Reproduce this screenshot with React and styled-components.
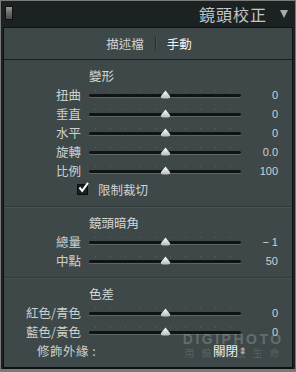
import React from 'react'
import styled, { createGlobalStyle } from 'styled-components';

const Global = createGlobalStyle`
  html, body {
    margin: 0;
    padding: 0;
    background: #6e6e6e;
  }
  body {
    font-family: "Noto Sans CJK TC", "Liberation Sans", sans-serif;
  }
`

const sections = [
  {
    title: '變形',
    rows: [
      { label: '扭曲', value: '0' },
      { label: '垂直', value: '0' },
      { label: '水平', value: '0' },
      { label: '旋轉', value: '0.0' },
      { label: '比例', value: '100' },
    ],
    check: '限制裁切',
  },
  {
    title: '鏡頭暗角',
    rows: [
      { label: '總量', value: '− 1' },
      { label: '中點', value: '50' },
    ],
  },
  {
    title: '色差',
    rows: [
      { label: '紅色/青色', value: '0' },
      { label: '藍色/黃色', value: '0' },
    ],
    fringe: true,
  },
]

const Thumb = () => (
  <svg width="11" height="9" viewBox="0 0 11 9">
    <defs>
      <linearGradient id="tg" x1="0" y1="0" x2="0" y2="1">
        <stop offset="0" stopColor="#ffffff" />
        <stop offset="1" stopColor="#b8bcbc" />
      </linearGradient>
    </defs>
    <path d="M5.5 0.5 C6.5 2 9 4.5 10 6 C10.6 7.4 9.6 8.5 8 8.5 L3 8.5 C1.4 8.5 0.4 7.4 1 6 C2 4.5 4.5 2 5.5 0.5 Z" fill="url(#tg)" />
  </svg>
)

const Slider = () => (
  <Track>
    <Ticks />
    <Groove />
    <ThumbWrap><Thumb /></ThumbWrap>
  </Track>
)

const App = () => {
  return (
    <Frame>
      <Global />
      <Header>
        <Handle />
        <Title>鏡頭校正</Title>
        <Caret />
      </Header>
      <Panel>
        <Tabs>
          <Tab>描述檔</Tab>
          <TabDivider />
          <Tab $active>手動</Tab>
        </Tabs>
        {sections.map((s, i) => (
          <Section key={s.title} $last={i === sections.length - 1}>
            <SectionTitle>{s.title}</SectionTitle>
            {s.rows.map(r => (
              <Row key={r.label}>
                <Label>{r.label}</Label>
                <Slider />
                <Value>{r.value}</Value>
              </Row>
            ))}
            {s.check && (
              <CheckRow>
                <Box>
                  <svg width="11" height="11" viewBox="0 0 11 11">
                    <path d="M1.5 5.5 L4.2 8.8 L10 0.8" stroke="#ffffff" strokeWidth="2" fill="none" />
                  </svg>
                </Box>
                <CheckLabel>{s.check}</CheckLabel>
              </CheckRow>
            )}
            {s.fringe && (
              <FringeRow>
                <FringeLabel>修飾外緣 :</FringeLabel>
                <Select>關閉<Arrows>⇕</Arrows></Select>
              </FringeRow>
            )}
          </Section>
        ))}
        <Watermark>
          <span className="big">DIGIPHOTO</span>
          <span className="small">用鏡頭說生命</span>
        </Watermark>
      </Panel>
    </Frame>
  )
}

export default App

const Frame = styled.div`
  width: 296px;
  height: 372px;
  box-sizing: border-box;
  border: 1px solid #7a7a7a;
  border-bottom-width: 3px;
  background: #1c2222;
  display: flex;
  flex-direction: column;
`

const Header = styled.div`
  height: 26px;
  display: flex;
  align-items: center;
  padding: 0 7px 0 4px;
`

const Handle = styled.div`
  width: 6px;
  height: 12px;
  border: 1px solid #111;
  background: linear-gradient(#9a9a9a, #6a6a6a 50%, #4a4a4a);
  margin-top: -2px;
`

const Title = styled.div`
  margin-left: auto;
  font-size: 16px;
  letter-spacing: 1px;
  color: #c4c6c6;
  margin-right: 13px;
  line-height: 26px;
`

const Caret = styled.div`
  width: 0;
  height: 0;
  border-left: 4.5px solid transparent;
  border-right: 4.5px solid transparent;
  border-top: 8px solid #a8acac;
  margin-top: -1px;
`

const Panel = styled.div`
  flex: 1;
  margin: 0 2px;
  border: 1px solid #0e1212;
  border-bottom-width: 2px;
  background: #3e4848;
  position: relative;
  display: flex;
  flex-direction: column;
`

const Tabs = styled.div`
  height: 32px;
  display: flex;
  justify-content: center;
  align-items: center;
  gap: 11px;
  padding-left: 2px;
  border-bottom: 1px solid #1a2020;
  box-sizing: border-box;
`

const Tab = styled.div`
  font-size: 12.5px;
  color: ${p => (p.$active ? '#f4f4f4' : '#cfd2d2')};
`

const TabDivider = styled.div`
  width: 1px;
  height: 13px;
  background: #262e2e;
  box-shadow: 1px 0 0 #4a5454;
`

const Section = styled.div`
  padding: 6px 14px ${p => (p.$last ? '0' : '7px')} 0;
  border-bottom: ${p => (p.$last ? 'none' : '1px solid #323b3b')};
  box-shadow: ${p => (p.$last ? 'none' : '0 1px 0 #465151')};
`

const SectionTitle = styled.div`
  height: 19px;
  line-height: 19px;
  padding-left: 85px;
  font-size: 12.5px;
  color: #d4d6d6;
`

const Row = styled.div`
  height: 19px;
  display: grid;
  grid-template-columns: 77px 152px 1fr;
  column-gap: 8px;
  align-items: center;
`

const Label = styled.div`
  text-align: right;
  font-size: 12.5px;
  color: #cdd0d0;
  line-height: 19px;
  white-space: nowrap;
`

const Value = styled.div`
  text-align: right;
  font-family: "Liberation Sans", Arial, sans-serif;
  font-size: 11px;
  color: #d0d2d2;
`

const Track = styled.div`
  position: relative;
  height: 19px;
`

const Ticks = styled.div`
  position: absolute;
  left: 6px;
  right: 6px;
  top: 5px;
  height: 1px;
  background: repeating-linear-gradient(90deg, #576262 0 1px, transparent 1px 15px);
`

const Groove = styled.div`
  position: absolute;
  left: 0;
  right: 0;
  top: 9px;
  height: 3px;
  border-radius: 2px;
  background: #0f1313;
  box-shadow: 0 1px 0 #5b6666;
`

const ThumbWrap = styled.div`
  position: absolute;
  left: 71px;
  top: 5px;
  line-height: 0;
`

const CheckRow = styled.div`
  height: 19px;
  display: flex;
  align-items: center;
  padding-left: 73px;
  gap: 10px;
`

const Box = styled.div`
  width: 9px;
  height: 9px;
  background: #1a1f1f;
  border: 1px solid #0b0e0e;
  position: relative;
  svg {
    position: absolute;
    left: 0;
    top: -3px;
  }
`

const CheckLabel = styled.div`
  font-size: 12.5px;
  color: #d0d2d2;
`

const FringeRow = styled.div`
  height: 19px;
  display: flex;
  align-items: center;
  padding-left: 33px;
`

const FringeLabel = styled.div`
  font-size: 12.5px;
  color: #c8cccc;
  letter-spacing: 0.5px;
`

const Select = styled.div`
  margin-left: auto;
  margin-right: 31px;
  font-size: 12.5px;
  color: #f2f2f2;
  display: flex;
  align-items: center;
`

const Arrows = styled.span`
  font-size: 9px;
  color: #dcdcdc;
  margin-left: 1px;
`

const Watermark = styled.div`
  position: absolute;
  left: 180px;
  top: 304px;
  width: 96px;
  display: flex;
  flex-direction: column;
  align-items: center;
  pointer-events: none;
  .big {
    font-family: "Liberation Sans", Arial, sans-serif;
    font-size: 14px;
    font-weight: bold;
    letter-spacing: 2.5px;
    margin-right: -2.5px;
    color: rgba(160, 170, 170, 0.4);
    line-height: 14px;
  }
  .small {
    font-family: "Noto Sans CJK TC", sans-serif;
    font-size: 10px;
    color: rgba(150, 160, 160, 0.3);
    line-height: 13px;
    letter-spacing: 7px;
    margin-right: -7px;
  }
`
